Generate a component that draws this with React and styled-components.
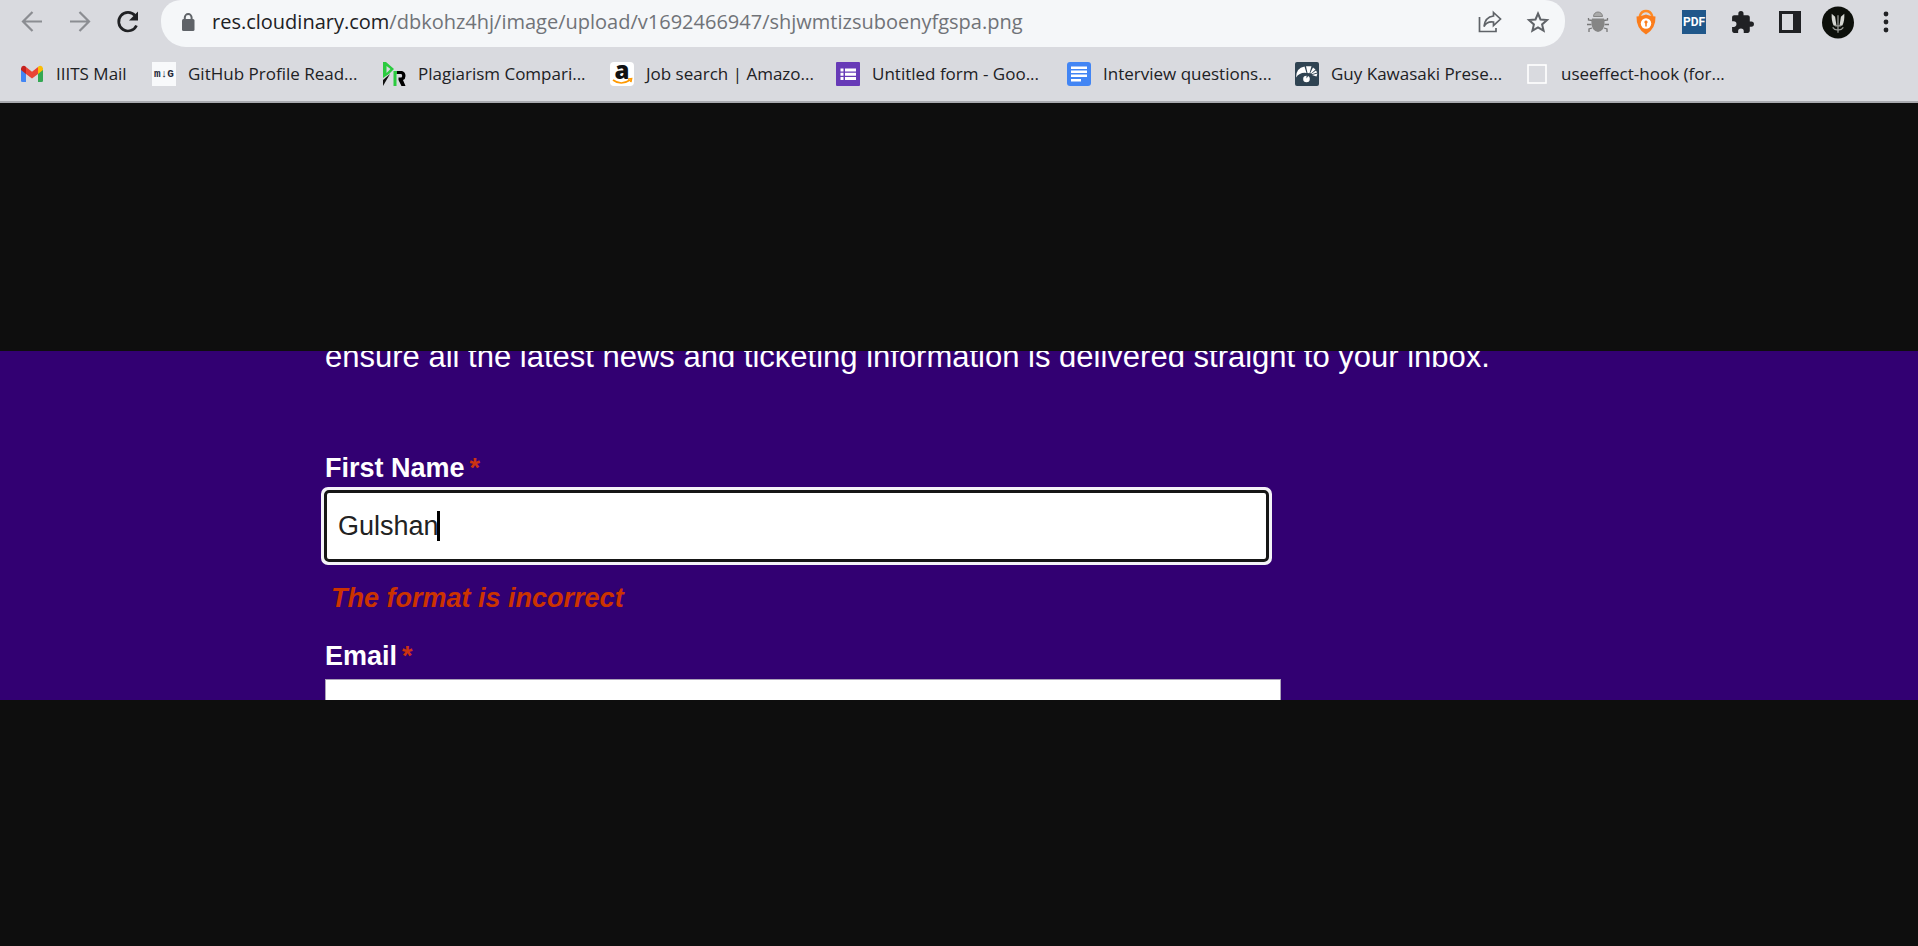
import React from "react";
import styled, { createGlobalStyle } from "styled-components";

const Global = createGlobalStyle`
  * { box-sizing: border-box; }
  html, body { margin: 0; background: #0e0e0e; }
  body { font-family: "Open Sans", "Noto Sans", sans-serif; }
  button, input { font: inherit; }
`;

const Page = styled.div`
  min-height: 100vh;
  display: flex;
  flex-direction: column;
`;

const Chrome = styled.header`
  background: #d9dadf;
  border-bottom: 2px solid #a9aaaf;
  overflow: hidden;
`;

const Toolbar = styled.div`
  display: flex;
  align-items: flex-start;
  height: 47px;
`;

const NavButtons = styled.nav`
  display: flex;
  gap: 16px;
  padding: 6px 17px 0 16px;
`;

const IconButton = styled.button`
  display: flex;
  align-items: center;
  justify-content: center;
  flex: none;
  width: ${(p) => p.$w || 32}px;
  height: 32px;
  padding: 0;
  border: 0;
  background: none;
  color: ${(p) => p.$color || "#202124"};
`;

const AddressBar = styled.div`
  flex: 1;
  min-width: 0;
  display: flex;
  align-items: center;
  height: 47px;
  padding: 0 11px 4px 17px;
  border-radius: 20px 20px 25px 25px;
  background: #f5f7f9;
  color: #5f6368;
`;

const Lock = styled.svg`
  flex: none;
  width: 20px;
  height: 24px;
`;

const Url = styled.div`
  flex: 1;
  min-width: 0;
  margin-left: 14px;
  overflow: hidden;
  white-space: nowrap;
  font-size: 20px;
  line-height: 30px;
  color: #707378;
`;

const Host = styled.span`
  color: #202124;
`;

const AddressActions = styled.div`
  display: flex;
  gap: 16px;
`;

const Extensions = styled.div`
  display: flex;
  gap: 16px;
  padding: 6px 16px 0 17px;
`;

const PdfBadge = styled.span`
  width: 24px;
  height: 24px;
  background: #20578a;
  color: #fff;
  font: bold 12px/24px Roboto, Arial, sans-serif;
  text-align: center;
`;

const BookmarksBar = styled.nav`
  display: flex;
  height: 54px;
  padding-left: 20px;
`;

const Bookmark = styled.a`
  display: flex;
  align-items: center;
  gap: 12px;
  flex: none;
  width: ${(p) => p.$w}px;
  color: #202124;
  font-size: 17px;
  line-height: 24px;
  text-decoration: none;
  white-space: nowrap;
`;

const Favicon = styled.svg`
  flex: none;
  width: 24px;
  height: 24px;
`;

const Badge = styled.span`
  flex: none;
  width: 24px;
  height: 24px;
  background: #f8f9fb;
  color: #24283a;
  font: bold 11px/24px "Liberation Mono", monospace;
  text-align: center;
`;

const AmazonBadge = styled.span`
  position: relative;
  flex: none;
  width: 24px;
  height: 24px;
  border-radius: 4px;
  background: #fff;
  color: #111;
  font: 800 24px/16px "Open Sans", Arial, sans-serif;
  text-align: center;
`;

const Smile = styled.svg`
  position: absolute;
  left: 0;
  bottom: 0;
  width: 24px;
  height: 24px;
`;

const Viewer = styled.main`
  flex: 1;
  display: flex;
  align-items: center;
`;

const Band = styled.section`
  flex: 1;
  height: 349px;
  margin-top: 2px;
  padding: 0 17%;
  overflow: hidden;
  background: #320072;
  color: #fff;
  font-family: "Liberation Sans", Arial, sans-serif;
`;

const Intro = styled.p`
  margin: -12px 0 0 -1px;
  font-size: 31px;
  line-height: 36px;
  white-space: nowrap;
`;

const Form = styled.form`
  width: 956px;
  margin: 77px 0 0 -1px;
  font-size: 27px;
  line-height: 32px;
`;

const Label = styled.label`
  display: flex;
  gap: 5px;
  font-weight: bold;
`;

const Required = styled.span`
  color: #cc3311;
`;

const ActiveField = styled.div`
  position: relative;
  display: flex;
  align-items: center;
  margin: 3px 9px 0 -4px;
  height: 78px;
  border: 3px solid #f4f2f8;
  border-radius: 7px;
  background: #fff;
`;

const NameInput = styled.input`
  width: 100%;
  height: 72px;
  padding: 0 11px;
  border: 3px solid #161616;
  border-radius: 5px;
  outline: none;
  background: #fff;
  color: #222;
  caret-color: transparent;
`;

const Caret = styled.span`
  position: absolute;
  top: 21px;
  left: 113px;
  width: 3px;
  height: 30px;
  background: #000;
`;

const ErrorText = styled.p`
  margin: 17px 0 0 6px;
  color: #cc3300;
  font-style: italic;
  font-weight: bold;
`;

const EmailGroup = styled.div`
  margin-top: 26px;
`;

const EmailInput = styled.input`
  display: block;
  width: 100%;
  height: 72px;
  margin-top: 7px;
  padding: 0 11px;
  border: 1px solid #aaa2b8;
  background: #fff;
`;

const GmailIcon = () => (
  <Favicon viewBox="0 0 24 24">
    <path d="M1 6v13q0 1 1.500 1H6V10z" fill="#4285f4" />
    <path d="M23 6v13q0 1-1.500 1H18V10z" fill="#34a853" />
    <path d="M1 8V6.500Q1.500 3 5 4l1 1v7z" fill="#c5221f" />
    <path d="M23 8V6.500Q22.500 3 19 4l-1 1v7z" fill="#fbbc04" />
    <path d="M6 5l6 4.800L18 5v7l-6 4.600L6 12z" fill="#ea4335" />
  </Favicon>
);

const PrIcon = () => (
  <Favicon viewBox="0 0 24 24">
    <path d="M1 16V0h3l8 7-5 5zM4.500 4v7l4-4z" fill="#2bcb3f" fillRule="evenodd" />
    <path d="M1 24V18l7-6z" fill="#111" />
    <path d="M11.500 24V9H16v3h-1.500v12z" fill="#2bcb3f" />
    <path d="M15 9h5q3.500 1 3.500 5 0 3-2.500 4l2.500 6h-4l-3-6v-2.500h3q1.500-1.500 0-3.500H15z" fill="#000" />
  </Favicon>
);

const FormsIcon = () => (
  <Favicon viewBox="0 0 24 24">
    <rect width="24" height="24" rx="1" fill="#673ab7" />
    <path d="M4.500 6.500h3v3h-3zm4.500 0h11v3H9zM4.500 10.700h3v3h-3zm4.500 0h11v3H9zM4.500 15h3v3h-3zM9 15h11v3H9z" fill="#fff" />
  </Favicon>
);

const DocsIcon = () => (
  <Favicon viewBox="0 0 24 24">
    <rect width="24" height="24" rx="3" fill="#4285f4" />
    <path d="M4 4.500h16v2.500H4zM4 8.500h16V11H4zM4 12.500h16V15H4zM4 17h10v2.500H4z" fill="#fff" />
  </Favicon>
);

const FanIcon = () => (
  <Favicon viewBox="0 0 24 24">
    <rect width="24" height="24" rx="2" fill="#2f4352" />
    <path d="M1 15.500Q1 6 9.500 4.500l2 6.500Q5 10 1 15.500zM11 4.300h5.500l-2 7-2-.200zM18 5.500l2.500 2-4.500 4-.800-.500zM21 8.500l1.200 2-5.200 1.700-.500-.500zM17 13l5.500-1.500-1 3z" fill="#fff" />
    <circle cx="11.500" cy="17" r="3.300" fill="#fff" />
    <path d="M11.500 16.500V13.500h2z" fill="#2f4352" />
  </Favicon>
);

const BoxIcon = () => (
  <Favicon viewBox="0 0 24 24">
    <rect x="3" y="3" width="18" height="18" fill="none" stroke="#fff" strokeWidth="1.600" />
  </Favicon>
);

const bookmarks = [
  { label: "IIITS Mail", w: 132, icon: <GmailIcon /> },
  { label: "GitHub Profile Read...", w: 230, icon: <Badge>m↓G</Badge> },
  { label: "Plagiarism Compari...", w: 228, icon: <PrIcon /> },
  {
    label: "Job search | Amazo...",
    w: 226,
    icon: (
      <AmazonBadge>
        a
        <Smile viewBox="0 0 24 24">
          <path d="M3 18q8 6 17 0M18 17.200l3.500-.500-.700 3.500" fill="none" stroke="#ff9900" strokeWidth="1.700" />
        </Smile>
      </AmazonBadge>
    ),
  },
  { label: "Untitled form - Goo...", w: 231, icon: <FormsIcon /> },
  { label: "Interview questions...", w: 228, icon: <DocsIcon /> },
  { label: "Guy Kawasaki Prese...", w: 230, icon: <FanIcon /> },
  { label: "useeffect-hook (for...", w: 204, icon: <BoxIcon /> },
];

export default function App() {
  return (
    <Page>
      <Global />
      <Chrome>
        <Toolbar>
          <NavButtons>
            <IconButton $color="#8b8d92" aria-label="Back">
              <svg width="24" height="24" viewBox="0 0 24 24" fill="none" stroke="currentColor" strokeWidth="2.200">
                <path d="M22 11.500H3.500M12.500 2l-9.500 9.500 9.500 9.500" />
              </svg>
            </IconButton>
            <IconButton $color="#8b8d92" aria-label="Forward">
              <svg width="24" height="24" viewBox="0 0 24 24" fill="none" stroke="currentColor" strokeWidth="2.200">
                <path d="M2 11.500h18.500M11.500 2l9.500 9.500-9.500 9.500" />
              </svg>
            </IconButton>
            <IconButton aria-label="Reload">
              <svg width="24" height="24" viewBox="0 0 24 24" fill="none" stroke="currentColor" strokeWidth="2.700">
                <path d="M19 5.500A9.300 9.300 0 1 0 20.500 15.500" />
                <path d="M22 1.500v9H13z" fill="currentColor" stroke="none" />
              </svg>
            </IconButton>
          </NavButtons>
          <AddressBar>
            <Lock viewBox="0 0 20 24">
              <rect x="4" y="9" width="12.500" height="12" rx="1.500" fill="#5f6368" />
              <path d="M6.800 10V7.500a3.400 3.400 0 0 1 6.800 0V10" fill="none" stroke="#5f6368" strokeWidth="2" />
            </Lock>
            <Url>
              <Host>res.cloudinary.com</Host>/dbkohz4hj/image/upload/v1692466947/shjwmtizsuboenyfgspa.png
            </Url>
            <AddressActions>
              <IconButton $color="#5f6368" aria-label="Share">
                <svg width="26" height="24" viewBox="0 0 26 24" fill="none" stroke="currentColor" strokeWidth="1.700">
                  <path d="M2.500 7v14.500H19V18" />
                  <path d="M16.500 2.500l7 6.500-7 6.500V12Q10 11 7 16.500 8 7 16.500 6z" />
                </svg>
              </IconButton>
              <IconButton $color="#5f6368" aria-label="Bookmark this tab">
                <svg width="24" height="24" viewBox="0 0 24 24" fill="none" stroke="currentColor" strokeWidth="2">
                  <path d="M12 3.500l2.500 6 6.500.600-4.900 4.300 1.500 6.300L12 17.300l-5.600 3.400 1.500-6.300L3 10.100l6.500-.600z" />
                </svg>
              </IconButton>
            </AddressActions>
          </AddressBar>
          <Extensions>
            <IconButton aria-label="Bug finder">
              <svg width="24" height="24" viewBox="0 0 24 24">
                <path d="M6 10.500L2.500 10V8M5.500 14.500H1M6 18l-3 1v3M18 10.500l3.500-.500V8M18.500 14.500H23M18 18l3 1v3" stroke="#777" strokeWidth="1.300" fill="none" />
                <path d="M7.500 6.500a4.500 4.500 0 0 1 9 0z" fill="#aaa" stroke="#858585" />
                <path d="M6 8.500h12q1.500 6-1 10.500-5 6-10 0Q4.500 14.500 6 8.500z" fill="#858585" />
              </svg>
            </IconButton>
            <IconButton aria-label="Privacy lock">
              <svg width="24" height="26" viewBox="0 0 24 26">
                <path d="M6 9V6.500q1.500-4.500 6-4.500t6 4.500V9" fill="none" stroke="#ff8a24" strokeWidth="2.400" />
                <path d="M12 5.500q5 2 9.500 2 .5 12-9.500 18-10-6-9.500-18 4.500 0 9.500-2z" fill="#fb7d1c" />
                <circle cx="12" cy="14.500" r="5.200" fill="#fff" />
                <path d="M12 11.500a1.600 1.600 0 0 1 .800 3v3h-1.600v-3a1.600 1.600 0 0 1 .800-3z" fill="#fb7d1c" />
              </svg>
            </IconButton>
            <IconButton aria-label="PDF tools">
              <PdfBadge>PDF</PdfBadge>
            </IconButton>
            <IconButton aria-label="Extensions">
              <svg width="25" height="25" viewBox="0 0 24 24" fill="currentColor">
                <path d="M20.500 11H19V7c0-1.100-.9-2-2-2h-4V3.500a2.500 2.500 0 0 0-5 0V5H4c-1.100 0-2 .9-2 2v3.800h1.500a2.700 2.700 0 0 1 0 5.400H2V20c0 1.100.9 2 2 2h3.800v-1.500a2.700 2.700 0 0 1 5.400 0V22H17c1.100 0 2-.9 2-2v-4h1.500a2.500 2.500 0 0 0 0-5z" />
              </svg>
            </IconButton>
            <IconButton aria-label="Side panel">
              <svg width="22" height="22" viewBox="0 0 22 22" fill="currentColor">
                <path d="M0 0h22v22H0zM3 3v16h11V3z" fillRule="evenodd" />
              </svg>
            </IconButton>
            <IconButton $w={32} aria-label="Profile">
              <svg width="33" height="33" viewBox="0 0 33 33">
                <circle cx="16.500" cy="16.500" r="16.500" fill="#0d100b" />
                <path d="M10 7.500l3.500 3 1.500 9.500-3-.500Q9.500 15 10 7.500zM23 7.500l-3.500 3L18 20l3-.500q2.500-4.500 2-12z" fill="#d4d6d2" />
                <path d="M16.500 9v18M13.500 20h6M11 21.500q2 3 5.500 2.500 3.500.5 5.500-2.500" stroke="#9b9d99" strokeWidth="1.300" fill="none" />
              </svg>
            </IconButton>
            <IconButton aria-label="Menu">
              <svg width="6" height="22" viewBox="0 0 6 22" fill="currentColor">
                <circle cx="3" cy="3" r="2.400" />
                <circle cx="3" cy="11" r="2.400" />
                <circle cx="3" cy="19" r="2.400" />
              </svg>
            </IconButton>
          </Extensions>
        </Toolbar>
        <BookmarksBar aria-label="Bookmarks">
          {bookmarks.map((b) => (
            <Bookmark key={b.label} href="#" $w={b.w}>
              {b.icon}
              <span>{b.label}</span>
            </Bookmark>
          ))}
        </BookmarksBar>
      </Chrome>
      <Viewer>
        <Band>
          <Intro>
            ensure all the latest news and ticketing information is delivered straight to your inbox.
          </Intro>
          <Form>
            <Label htmlFor="first-name">
              First Name<Required>*</Required>
            </Label>
            <ActiveField>
              <NameInput id="first-name" type="text" defaultValue="Gulshan" />
              <Caret />
            </ActiveField>
            <ErrorText>The format is incorrect</ErrorText>
            <EmailGroup>
              <Label htmlFor="email">
                Email<Required>*</Required>
              </Label>
              <EmailInput id="email" type="email" />
            </EmailGroup>
          </Form>
        </Band>
      </Viewer>
    </Page>
  );
}
